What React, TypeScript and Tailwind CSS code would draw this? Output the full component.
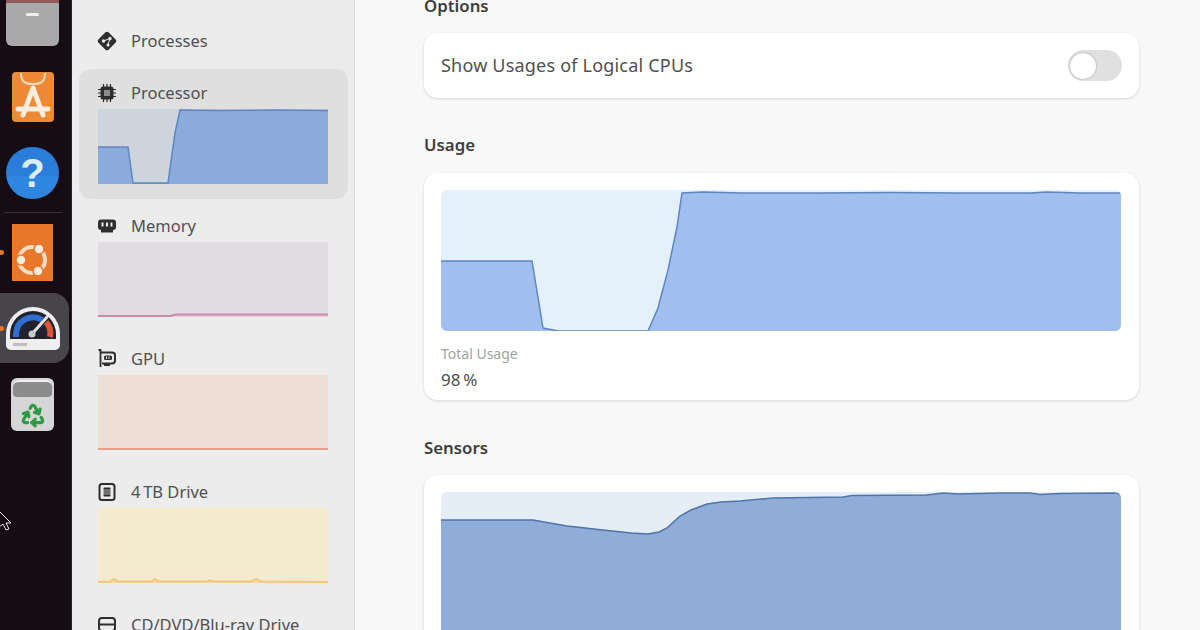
import { Recycle } from "lucide-react";

const FONT = "font-['Noto_Sans','Open_Sans',sans-serif]";

// points are relative to the chart's top left corner, in chart pixels
const USAGE_LINE = "0,71 91,71 102,138 117,141 207,141 217,118 227,80 236,37 241,3 262,2 300,3 380,3 450,2.5 515,3 590,3 605,2 640,3 680,3";
const SENSORS_LINE = "0,28 92,28 126,34 162,38 190,41 207,42 218,40 226,36 239,24 250,18 266,12 280,10 299,9 332,6 402,5 411,3.5 486,3 502,1 517,2 559,1 589,1 599,2.5 619,1.5 674,1 680,2";
const PROCESSOR_LINE = "0,38 30,38 35,74 70,74 77,24 82,1 120,1.5 180,1 230,1.5";
const MEMORY_LINE = "0,74 72,74 78,72.5 230,72.5";
const GPU_LINE = "0,74 230,74";
const DRIVE_LINE = "0,74 12,73.5 16,71 20,73.5 54,73.5 57,71 61,73.5 108,73.5 112,72.5 116,73.5 152,73.5 158,71 164,73.5 230,74";

function AreaChart({
  width,
  height,
  line,
  stroke,
  fill,
  strokeWidth = 1.5,
}: {
  width: number;
  height: number;
  line: string;
  stroke: string;
  fill: string;
  strokeWidth?: number;
}) {
  return (
    <svg width={width} height={height} viewBox={`0 0 ${width} ${height}`} className="block">
      <polygon points={`0,${height} ${line} ${width},${height}`} fill={fill} />
      <polyline points={line} fill="none" stroke={stroke} strokeWidth={strokeWidth} />
    </svg>
  );
}

function ProcessesIcon() {
  return (
    <svg width="20" height="20" viewBox="0 0 20 20">
      <rect x="2.800" y="2.800" width="14.400" height="14.400" rx="2.500" transform="rotate(45 10 10)" fill="#2e2e2e" />
      <circle cx="6.500" cy="10" r="1.700" fill="#ececec" />
      <circle cx="13" cy="7.500" r="1.700" fill="#ececec" />
      <circle cx="11" cy="14" r="1.500" fill="#ececec" />
      <path d="M6.500 10 L13 7.500 M13 7.500 L11 13.500" stroke="#ececec" strokeWidth="1" />
    </svg>
  );
}

function ChipIcon() {
  return (
    <svg width="20" height="20" viewBox="0 0 20 20">
      <path d="M1 6.500h18M1 10h18M1 13.500h18M6.500 1v18M10 1v18M13.500 1v18" stroke="#2e2e2e" strokeWidth="1.200" />
      <rect x="3.500" y="3.500" width="13" height="13" rx="2.500" fill="#2e2e2e" />
      <rect x="7" y="7" width="6" height="6" fill="#8d8d8d" />
    </svg>
  );
}

function MemoryIcon() {
  return (
    <svg width="20" height="20" viewBox="0 0 20 20">
      <rect x="1" y="3.500" width="18" height="10.500" rx="3" fill="#2e2e2e" />
      <rect x="4" y="14" width="12" height="2.500" fill="#2e2e2e" />
      <path d="M5.500 6.500v4M10 6.500v4M14.500 6.500v4" stroke="#ececec" strokeWidth="2" />
    </svg>
  );
}

function GpuIcon() {
  return (
    <svg width="20" height="20" viewBox="0 0 20 20">
      <path d="M1.500 1h2v17" fill="none" stroke="#2e2e2e" strokeWidth="1.800" />
      <path d="M4 3.500h11a3 3 0 0 1 3 3v5a3 3 0 0 1-3 3H5" fill="none" stroke="#2e2e2e" strokeWidth="2" />
      <path d="M7 14.500v2.500h6v-2.500" fill="#2e2e2e" />
      <rect x="7" y="6.500" width="8" height="4.500" rx="1.500" fill="#2e2e2e" />
      <path d="M9.500 7.500v2.500M12 7.500v2.500" stroke="#ececec" strokeWidth="1" />
    </svg>
  );
}

function DriveIcon() {
  return (
    <svg width="20" height="20" viewBox="0 0 20 20">
      <rect x="2.500" y="2" width="15" height="16" rx="2.500" fill="none" stroke="#2e2e2e" strokeWidth="2" />
      <rect x="6.500" y="5.500" width="7" height="9" rx="1" fill="#2e2e2e" />
      <path d="M6 8h8M6 10h8M6 12h8" stroke="#ececec" strokeWidth="0.700" />
    </svg>
  );
}

function DiscIcon() {
  return (
    <svg width="20" height="20" viewBox="0 0 20 20">
      <rect x="2" y="3" width="16" height="13" rx="3" fill="none" stroke="#2e2e2e" strokeWidth="2" />
      <path d="M2 9.500h16" stroke="#2e2e2e" strokeWidth="2" />
      <path d="M6 16v3h8v-3" fill="#2e2e2e" />
    </svg>
  );
}

function SidebarItem({
  icon,
  label,
  active,
  children,
}: {
  icon: React.ReactNode;
  label: string;
  active?: boolean;
  children: React.ReactNode;
}) {
  return (
    <div className={`mb-[3px] ml-[7px] mr-[6px] h-[130px] shrink-0 rounded-xl px-[18px] pt-3 ${active ? "bg-[#dfdfdf]" : ""}`}>
      <div className="flex h-6 items-center gap-[14px] text-[16.5px] text-[#505050]">
        {icon}
        <span>{label}</span>
      </div>
      <div className="ml-px mt-1 w-[230px]">{children}</div>
    </div>
  );
}

function Sidebar() {
  return (
    <aside className="flex h-[630px] w-[283px] shrink-0 flex-col overflow-hidden border-r border-[#dcdcdc] bg-[#ececec] pt-4">
      <div className="mb-[3px] ml-[7px] mr-[6px] flex h-[50px] shrink-0 items-center gap-[14px] px-[18px] text-[16.5px] text-[#505050]">
        <ProcessesIcon />
        <span>Processes</span>
      </div>
      <SidebarItem icon={<ChipIcon />} label="Processor" active>
        <div className="bg-[#cdd4de]">
          <AreaChart width={230} height={75} line={PROCESSOR_LINE} stroke="#5f86c0" fill="#8aabdc" />
        </div>
      </SidebarItem>
      <SidebarItem icon={<MemoryIcon />} label="Memory">
        <div className="bg-[#e1dce1]">
          <AreaChart width={230} height={75} line={MEMORY_LINE} stroke="#cc8ba6" fill="#efcbd9" strokeWidth={2} />
        </div>
      </SidebarItem>
      <SidebarItem icon={<GpuIcon />} label="GPU">
        <div className="bg-[#eddfd6]">
          <AreaChart width={230} height={75} line={GPU_LINE} stroke="#e8a088" fill="#f2c4b0" strokeWidth={2} />
        </div>
      </SidebarItem>
      <SidebarItem icon={<DriveIcon />} label={"4\u2009TB Drive"}>
        <div className="bg-[#f4ebcf]">
          <AreaChart width={230} height={75} line={DRIVE_LINE} stroke="#f3c67c" fill="#f7d79c" strokeWidth={2} />
        </div>
      </SidebarItem>
      <SidebarItem icon={<DiscIcon />} label="CD/DVD/Blu-ray Drive">
        <div className="h-[75px] bg-[#e1dce1]" />
      </SidebarItem>
    </aside>
  );
}

function FilesIcon() {
  return (
    <div className="relative -mt-[3px] h-[49px] w-[53px] overflow-hidden rounded-b-md bg-[#a9a9a9]">
      <div className="h-[6px] bg-[#8f5a5a]" />
      <div className="mx-auto mt-[10px] h-[3px] w-[13px] rounded-sm bg-[#f0f0f0]" />
    </div>
  );
}

function AppCenterIcon() {
  return (
    <svg width="44" height="52" viewBox="0 0 44 52" className="mt-[25px] block">
      <rect x="1" y="1" width="42" height="50" rx="4" fill="#ee8a35" />
      <path d="M10 2c0 9 4 11 12 11s12-2 12-11" fill="none" stroke="#f8dcc0" strokeWidth="2" />
      <path d="M22 17 L12 44 M22 17 L32 44 M7 38 H37" fill="none" stroke="#fbeee0" strokeWidth="5" strokeLinecap="round" />
    </svg>
  );
}

function HelpIcon() {
  return (
    <div className="mt-[24px] flex h-[52px] w-[53px] items-center justify-center rounded-full bg-[linear-gradient(#2a7dd8_55%,#2f86e0_55%)] font-['Liberation_Sans',sans-serif] text-[40px] font-bold leading-none text-[#dceefc]">
      ?
    </div>
  );
}

function UbuntuIcon() {
  return (
    <svg width="41" height="57" viewBox="0 0 41 57" className="mt-[11px] block">
      <rect width="41" height="57" fill="#e8762b" />
      <circle cx="20" cy="36" r="13" fill="none" stroke="#f7dcc4" strokeWidth="4" />
      <circle cx="27" cy="25" r="5" fill="#fbeadb" stroke="#e8762b" strokeWidth="1.500" />
      <circle cx="9" cy="36" r="5" fill="#fbeadb" stroke="#e8762b" strokeWidth="1.500" />
      <circle cx="26" cy="47" r="5" fill="#fbeadb" stroke="#e8762b" strokeWidth="1.500" />
    </svg>
  );
}

function MonitorIcon() {
  return (
    <div className="mt-3 flex h-[70px] w-[69px] items-center justify-center self-start rounded-r-2xl bg-[#48454a] pr-[3px]">
      <svg width="56" height="48" viewBox="0 0 56 48" className="block">
        <path d="M1 30a27 27 0 0 1 54 0v11a5 5 0 0 1-5 5H6a5 5 0 0 1-5-5z" fill="#eeeeee" />
        <path d="M5 35V30a23 23 0 0 1 46 0v5z" fill="#20222e" />
        <path d="M11 33V30a17 17 0 0 1 26-14" fill="none" stroke="#2f6fd0" strokeWidth="6" />
        <path d="M41 18a17 17 0 0 1 4 15" fill="none" stroke="#d9583a" strokeWidth="6" />
        <path d="M27 30 L42 13" stroke="#e2e2e2" strokeWidth="3" strokeLinecap="round" />
        <circle cx="27" cy="30" r="3.500" fill="#c8c8c8" />
        <rect x="8" y="39" width="14" height="3" fill="#bdbdbd" />
      </svg>
    </div>
  );
}

function TrashIcon() {
  return (
    <div className="relative mt-[15px] h-[53px] w-[43px] rounded-md bg-[#d6d6d6] p-[2px]">
      <div className="h-[17px] rounded-t-md rounded-b-sm border-t-2 border-[#f0f0f0] bg-[#8c8c8c]" />
      <Recycle size={26} strokeWidth={3} className="mx-auto mt-[5px] text-[#2f9a45]" />
    </div>
  );
}

function Dock() {
  return (
    <nav className="relative flex h-[630px] w-[72px] shrink-0 flex-col items-center overflow-hidden border-r border-[#2a2228] bg-[#150c14] pr-[6px]">
      <FilesIcon />
      <AppCenterIcon />
      <HelpIcon />
      <div className="mt-[13px] h-px w-[58px] bg-[#3a3238]" />
      <UbuntuIcon />
      <MonitorIcon />
      <TrashIcon />
      <span className="absolute left-0 top-[250px] h-[5px] w-[4px] rounded-r-full bg-[#e0742a]" />
      <span className="absolute left-0 top-[326px] h-[5px] w-[4px] rounded-r-full bg-[#e0742a]" />
      <svg width="14" height="22" viewBox="0 0 14 22" className="absolute left-0 top-[509px]">
        <path d="M-2 1 L11 14 L6 14 L9 20 L6 21 L3 15 L-2 19 Z" fill="#150c14" stroke="#e8e8e8" strokeWidth="1" />
      </svg>
    </nav>
  );
}

function Heading({ children }: { children: React.ReactNode }) {
  return <h2 className="h-6 text-[16.8px] font-semibold leading-6 text-[#3d3d3d]">{children}</h2>;
}

function Card({ className, children }: { className?: string; children: React.ReactNode }) {
  return <div className={`rounded-[14px] bg-white shadow-[0_1px_3px_rgba(0,0,0,0.14)] ${className ?? ""}`}>{children}</div>;
}

function Main() {
  return (
    <main className="h-[630px] flex-1 overflow-hidden bg-[#f8f8f8] pl-[69px]">
      <div className="-mt-[6px] flex w-[715px] flex-col">
        <Heading>Options</Heading>
        <Card className="mt-[15px] flex h-[65px] items-center justify-between px-[17px]">
          <span className="text-[18px] tracking-[0.2px] text-[#505050]">Show Usages of Logical CPUs</span>
          <div className="flex h-[31px] w-[54px] items-center rounded-full bg-[#e0e0e0] px-[2px]">
            <div className="h-[26px] w-[26px] rounded-full bg-white shadow-[0_0_2px_rgba(0,0,0,0.35)]" />
          </div>
        </Card>

        <div className="mt-[35px]">
          <Heading>Usage</Heading>
        </div>
        <Card className="mt-4 h-[227px] px-[17px] pt-[17px]">
          <div className="w-[680px] overflow-hidden rounded-md bg-[#e4f0fa]">
            <AreaChart width={680} height={141} line={USAGE_LINE} stroke="#5f86c0" fill="#a0bfef" />
          </div>
          <p className="mt-[14px] text-[14px] leading-[18px] text-[#a2a2a2]">Total Usage</p>
          <p className="mt-[6px] text-[17px] leading-[22px] text-[#4d4d4d]">{"98\u2009%"}</p>
        </Card>

        <div className="mt-9">
          <Heading>Sensors</Heading>
        </div>
        <Card className="mt-[15px] h-[220px] px-[17px] pt-[17px]">
          <div className="w-[680px] overflow-hidden rounded-md bg-[#e5edf7]">
            <AreaChart width={680} height={180} line={SENSORS_LINE} stroke="#4f74a8" fill="#90acd8" />
          </div>
        </Card>
      </div>
    </main>
  );
}

export default function App() {
  return (
    <div className={`flex h-[630px] w-[1200px] overflow-hidden ${FONT}`}>
      <Dock />
      <Sidebar />
      <Main />
    </div>
  );
}
